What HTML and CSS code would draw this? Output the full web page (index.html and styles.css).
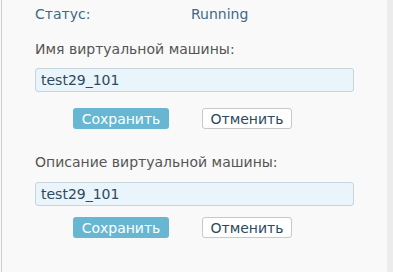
FILE: index.html
```html
<!DOCTYPE html>
<html lang="ru">
<head>
<meta charset="UTF-8" />
<meta name="viewport" content="width=device-width, initial-scale=1.0" />
<title>Виртуальная машина</title>
<link rel="stylesheet" href="styles.css">
</head>
<body>
  <div class="panel">
    <div class="status">
      <span class="status-label">Статус:</span>
      <span class="status-value">Running</span>
    </div>

    <form class="field first">
      <label for="vm-name">Имя виртуальной машины:</label>
      <input type="text" id="vm-name" value="test29_101" />
      <div class="actions">
        <button type="submit" class="save">Сохранить</button>
        <button type="reset" class="cancel">Отменить</button>
      </div>
    </form>

    <form class="field second">
      <label for="vm-desc">Описание виртуальной машины:</label>
      <input type="text" id="vm-desc" value="test29_101" />
      <div class="actions">
        <button type="submit" class="save">Сохранить</button>
        <button type="reset" class="cancel">Отменить</button>
      </div>
    </form>
  </div>
  <div class="scroll"></div>
</body>
</html>
```

FILE: styles.css
```css
html, body {
  margin: 0;
  padding: 0;
  height: 100%;
}

body {
  display: flex;
  font-family: "DejaVu Sans", Verdana, sans-serif;
  font-size: 14px;
  background-color: #f9f9f9;
  color: #555;
}

.panel {
  flex: 1;
  margin-left: 1px;
  border-left: 1px solid #cfcfcf;
  padding: 6px 0 0 33px;
}

.scroll {
  width: 6px;
  background-color: #ececec;
}

.status {
  display: flex;
  height: 17px;
  line-height: 17px;
  color: #3d6a86;
}

.status-label {
  width: 156px;
}

.field {
  display: flex;
  flex-direction: column;
  width: 319px;
}

.field.first {
  margin-top: 18px;
}

.field.second {
  margin-top: 25px;
}

.field label {
  line-height: 17px;
  margin-bottom: 10px;
}

.field.second label {
  margin-bottom: 11px;
}

.field input {
  height: 24px;
  box-sizing: border-box;
  padding: 0 5px;
  border: 1px solid #c9d3da;
  border-radius: 3px;
  background-color: #eaf4fb;
  font-family: "DejaVu Sans", Verdana, sans-serif;
  font-size: 14px;
  color: #2e4a5c;
}

.actions {
  display: flex;
  gap: 33px;
  margin-top: 16px;
  padding-left: 38px;
}

.field.second .actions {
  margin-top: 11px;
}

.actions button {
  height: 21px;
  padding: 0;
  border-radius: 3px;
  font-family: "DejaVu Sans", Verdana, sans-serif;
  font-size: 14px;
  cursor: pointer;
}

.save {
  width: 96px;
  border: none;
  background-color: #67b7d3;
  color: #fff;
}

.cancel {
  width: 90px;
  border: 1px solid #c8c8c8;
  background-color: #fff;
  color: #2c4a60;
}
```
